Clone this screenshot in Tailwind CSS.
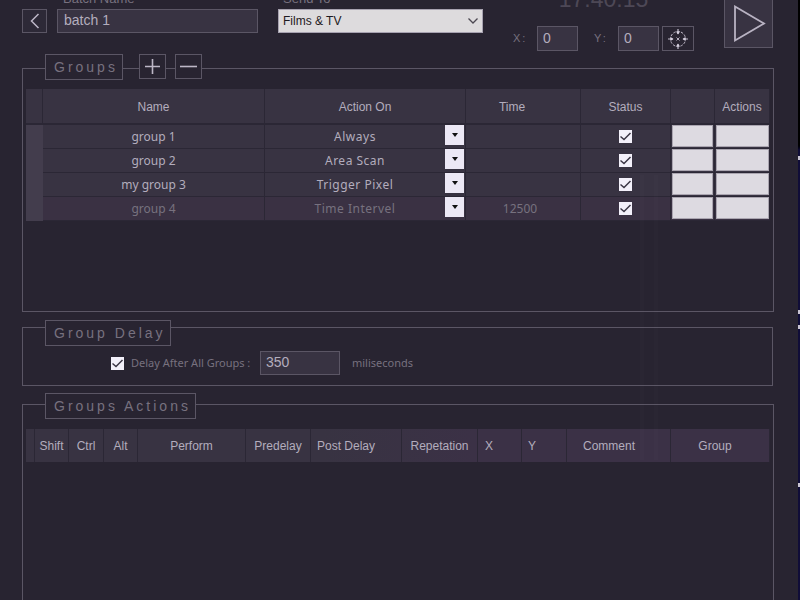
<!DOCTYPE html>
<html lang="en">
<head>
<meta charset="utf-8">
<title>Batch editor</title>
<script src="https://cdn.jsdelivr.net/npm/@tailwindcss/browser@4"></script>
</head>
<body class="bg-[#282431] font-['Liberation_Sans',sans-serif] text-xs text-[#b3adbd]">
<div class="relative flex h-screen flex-col overflow-hidden pl-[22px] pr-[26px]">

  <header class="-mt-[9px] flex items-start">
    <button aria-label="Back" class="mt-[18px] grid h-6 w-[25px] place-items-center border border-[#5b5665] bg-[#2d2937]">
      <svg width="10" height="16" viewBox="0 0 10 16" fill="none" stroke="#bdb7c7" stroke-width="1.500"><path d="M8.500 1 1.500 8l7 7"/></svg>
    </button>
    <div class="ml-2.5 flex w-[201px] flex-col gap-0.5">
      <label for="batch" class="pl-1.5 text-[13px] leading-4 text-[#77717f]">Batch Name</label>
      <input id="batch" value="batch 1" class="h-6 w-full border border-[#5b5665] bg-[#383342] px-1.5 pb-0.5 text-sm text-[#b3adbd]">
    </div>
    <div class="ml-5 flex w-[205px] flex-col gap-0.5">
      <label for="send" class="pl-[5px] text-[13px] leading-4 text-[#77717f]">Send To</label>
      <div class="grid h-6 items-center border border-[#a7a2b0] bg-[#dddbdd]">
        <select id="send" class="col-start-1 row-start-1 h-full w-full appearance-none pl-1 text-xs text-[#1d1a22]"><option>Films &amp; TV</option></select>
        <svg class="pointer-events-none col-start-1 row-start-1 mr-1 justify-self-end" width="10" height="6" viewBox="0 0 10 6" fill="none" stroke="#4c4852" stroke-width="1.300"><path d="M.5.500 5 5 9.500.500"/></svg>
      </div>
    </div>
    <div class="ml-[30px] flex flex-col gap-[19px]">
      <time class="text-center text-[23px] leading-4 text-[#4d4856]">17:40:15</time>
      <div class="flex items-center">
        <label for="px" class="w-6 text-[11px] tracking-[2px] text-[#77717f]">X:</label>
        <input id="px" value="0" class="h-[25px] w-[41px] border border-[#5b5665] bg-[#383342] px-[5px] pb-0.5 text-sm text-[#b3adbd]">
        <label for="py" class="ml-4 w-6 text-[11px] tracking-[2px] text-[#77717f]">Y:</label>
        <input id="py" value="0" class="h-[25px] w-[41px] border border-[#5b5665] bg-[#383342] px-[5px] pb-0.5 text-sm text-[#b3adbd]">
        <button aria-label="Pick position" class="ml-[3px] grid h-[25px] w-8 place-items-center border border-[#5b5665]">
          <svg width="20" height="20" viewBox="0 0 20 20" fill="none" stroke="#c4becd">
            <circle cx="10" cy="10" r="7.500" stroke-width="1" stroke-dasharray="2.500 1.430" stroke-dashoffset="1.200"/>
            <path stroke-width="1.200" d="M10 0v5M10 15v5M0 10h5M15 10h5"/>
            <path stroke="none" fill="#d6d0df" d="M8 2.500h4L10 5.500zM8 17.500h4L10 14.500zM2.500 8v4L5.500 10zM17.500 8v4L14.500 10z"/>
            <path stroke-width=".9" d="m8.500 8.500 3 3m0-3-3 3"/>
          </svg>
        </button>
      </div>
    </div>
    <button aria-label="Run" class="ml-auto mr-px mt-2 grid h-[49px] w-[49px] place-items-center border border-[#5b5665] bg-[#383342]">
      <svg width="34" height="38" viewBox="0 0 34 38" fill="none" stroke="#b9b3c3" stroke-width="1.800"><path d="M3 1.500v34L32 18.500z"/></svg>
    </button>
  </header>

  <section aria-labelledby="g1" class="mt-[17px] min-h-[244px] border border-[#5b5665]">
    <div class="-mt-[15px] ml-[22px] flex h-[26px]">
      <h2 id="g1" class="border border-[#5b5665] bg-[#282431] pl-2 pr-1 text-sm leading-6 tracking-[3px] text-[#77717f]">Groups</h2>
      <button aria-label="Add group" class="ml-4 grid h-[25px] w-[27px] place-items-center border border-[#5b5665] bg-[#282431]">
        <svg width="17" height="17" viewBox="0 0 17 17" stroke="#bdb7c7" stroke-width="1.600"><path d="M8.500 1v15M1 8.500h15"/></svg>
      </button>
      <button aria-label="Remove group" class="ml-[9px] grid h-[25px] w-[27px] place-items-center border border-[#5b5665] bg-[#282431]">
        <svg width="17" height="17" viewBox="0 0 17 17" stroke="#bdb7c7" stroke-width="1.600"><path d="M0 8.500h17"/></svg>
      </button>
    </div>
    <div class="mt-[9px] px-[3px]">
      <table class="w-full table-fixed border-separate border-spacing-0 text-center">
        <colgroup><col class="w-[17px]"><col class="w-[222px]"><col class="w-[201px]"><col class="w-[115px]"><col class="w-[90px]"><col class="w-[44px]"><col class="w-[55px]"></colgroup>
        <thead>
          <tr class="h-9 bg-[#383342] *:border-b-2 *:border-r *:border-[#2b2735] *:p-0 *:pt-0.5 *:font-normal">
            <th></th><th>Name</th><th>Action On</th><th><div class="pr-[22px]">Time</div></th><th>Status</th><th></th><th>Actions</th>
          </tr>
        </thead>
        <tbody id="rows" class="font-['Noto_Sans',sans-serif]"></tbody>
      </table>
    </div>
  </section>

  <section aria-labelledby="g2" class="mr-px mt-[15px] border border-[#5b5665] pb-2.5">
    <h2 id="g2" class="-mt-2 ml-[22px] h-[26px] w-fit border border-[#5b5665] bg-[#282431] pl-2 pr-1 text-sm leading-6 tracking-[3px] text-[#77717f]">Group Delay</h2>
    <div class="ml-[88px] mt-[5px] flex items-center font-['Noto_Sans',sans-serif] text-[11px] text-[#77717f]">
      <span class="grid">
        <input id="after" type="checkbox" checked class="col-start-1 row-start-1 size-[13px] appearance-none bg-[#f3f0fa]">
        <svg class="pointer-events-none col-start-1 row-start-1" width="13" height="13" viewBox="0 0 13 13" fill="none" stroke="#3b3645" stroke-width="1.500"><path d="M1.500 6.500 5 9.500l6.500-6.500"/></svg>
      </span>
      <label for="after" class="ml-[7px] w-[129px]">Delay After All Groups :</label>
      <input id="ms" value="350" class="h-6 w-20 border border-[#5b5665] bg-[#383342] px-[5px] pb-0.5 font-['Liberation_Sans',sans-serif] text-sm text-[#b3adbd]">
      <label for="ms" class="ml-3">miliseconds</label>
    </div>
  </section>

  <section aria-labelledby="g3" class="mt-[18px] flex-1 border border-b-0 border-[#5b5665]">
    <h2 id="g3" class="-mt-3 ml-[22px] h-[26px] w-fit border border-[#5b5665] bg-[#282431] pl-2 pr-1 text-sm leading-6 tracking-[3px] text-[#77717f]">Groups Actions</h2>
    <div class="mt-2.5 px-[3px]">
      <table class="w-full table-fixed border-separate border-spacing-0 bg-linear-to-r from-[#383342] from-40% to-[#3b3146] to-60% text-center">
        <colgroup><col class="w-[9px]"><col class="w-[34px]"><col class="w-[35px]"><col class="w-[34px]"><col class="w-[108px]"><col class="w-[65px]"><col class="w-[91px]"><col class="w-[76px]"><col class="w-[44px]"><col class="w-[45px]"><col class="w-[104px]"><col class="w-[99px]"></colgroup>
        <thead>
          <tr class="h-[33px] *:border-r *:border-[#2b2735] *:p-0 *:font-normal">
            <th></th><th>Shift</th><th>Ctrl</th><th>Alt</th><th>Perform</th><th>Predelay</th><th><div class="pl-1.5 text-left">Post Delay</div></th><th>Repetation</th><th><div class="pl-[7px] text-left">X</div></th><th><div class="pl-1.5 text-left">Y</div></th><th><div class="pl-4 text-left">Comment</div></th><th><div class="pr-2.5">Group</div></th>
          </tr>
        </thead>
      </table>
    </div>
  </section>

  <!-- Faint light streaks over the translucent window -->
  <div aria-hidden="true" class="pointer-events-none absolute right-[142px] top-[175px] flex h-[285px] gap-2.5">
    <i class="w-1 bg-white/1"></i><i class="w-1 bg-white/1"></i>
  </div>
  <!-- Desktop edge behind the window -->
  <div aria-hidden="true" class="absolute inset-y-0 right-0 w-0.5 bg-linear-to-b from-black from-24% to-[#100d38] to-25%">
    <i class="absolute top-[156px] h-1 w-full bg-[#c9c4d4]"></i>
    <i class="absolute top-[310px] h-1 w-full bg-[#c9c4d4]"></i>
    <i class="absolute top-[325px] h-1 w-full bg-[#c9c4d4]"></i>
    <i class="absolute top-[483px] h-1 w-full bg-[#c9c4d4]"></i>
  </div>
</div>

<script>
const groups = [
  ["group 1", "Always", ""],
  ["group 2", "Area Scan", ""],
  ["my group 3", "Trigger Pixel", ""],
  ["group 4", "Time Intervel", "12500"],
];
document.getElementById("rows").innerHTML = groups.map(([name, action, time], i) => `
  <tr class="h-6 *:border-b *:border-r *:border-[#2b2735] *:p-0 ${i === 3 ? "bg-[#3a3143] text-[#77717f]" : "bg-[#383342]"}">
    <td class="border-none! bg-[#433d4d]"></td>
    <td>${name}</td>
    <td><div class="flex h-[23px] items-start pr-px">
      <select aria-label="Action on for ${name}" class="h-[23px] min-w-0 flex-1 appearance-none text-center tracking-[0.5px]"><option>${action}</option></select>
      <span class="grid h-5 w-[19px] place-items-center bg-[#ece8f5]"><svg width="6" height="4" viewBox="0 0 6 4"><path d="M0 0h6L3 4z" fill="#111"/></svg></span>
    </div></td>
    <td><div class="pr-1.5">${time}</div></td>
    <td><span class="mx-auto grid w-[13px]">
      <input type="checkbox" checked aria-label="${name} enabled" class="col-start-1 row-start-1 size-[13px] appearance-none bg-[#f3f0fa]">
      <svg class="pointer-events-none col-start-1 row-start-1" width="13" height="13" viewBox="0 0 13 13" fill="none" stroke="#3b3645" stroke-width="1.500"><path d="M1.500 6.500 5 9.500l6.500-6.500"/></svg>
    </span></td>
    <td><div class="flex h-[23px] pl-px pr-px"><button aria-label="Edit ${name}" class="h-[22px] flex-1 border border-[#aaa5b0] bg-[#dddae1]"></button></div></td>
    <td><div class="flex h-[23px] pl-px"><button aria-label="Actions for ${name}" class="h-[22px] flex-1 border border-[#aaa5b0] bg-[#dddae1]"></button></div></td>
  </tr>`).join("");
</script>
</body>
</html>
